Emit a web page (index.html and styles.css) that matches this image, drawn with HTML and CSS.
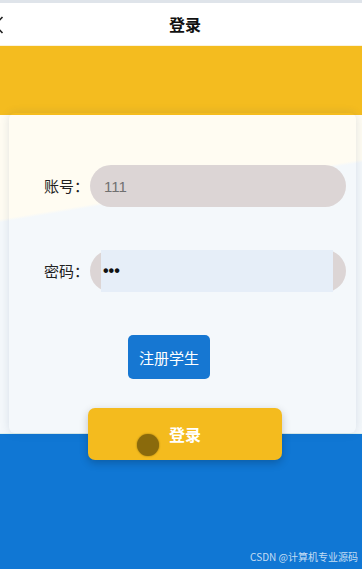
FILE: index.html
```html
<!DOCTYPE html>
<html lang="zh">
<head>
<meta charset="utf-8">
<title>登录</title>
<link rel="stylesheet" href="styles.css">
</head>
<body>
<div class="app">
  <header class="nav">
    <svg class="back" width="8" height="20" viewBox="0 0 8 20"><path d="M2.5 2 L-5 10 L2.5 18" fill="none" stroke="#222" stroke-width="1.6"/></svg>
    <h1 class="nav-title">登录</h1>
  </header>
  <main class="stage">
    <div class="band-top"></div>
    <section class="card">
      <div class="field">
        <span class="label">账号：</span>
        <div class="pill"><span class="value">111</span></div>
      </div>
      <div class="field field-pwd">
        <span class="label">密码：</span>
        <div class="pill"><div class="autofill"><span class="dots">•••</span></div></div>
      </div>
      <button class="btn-register">注册学生</button>
      <button class="btn-login">登录<span class="touch"></span></button>
    </section>
    <div class="band-bottom"><span class="mark">CSDN @计算机专业源码</span></div>
  </main>
</div>
</body>
</html>
```
FILE: styles.css
```css
* { box-sizing: border-box; }
html, body { margin: 0; padding: 0; }
body {
  width: 362px;
  height: 569px;
  overflow: hidden;
  font-family: "Noto Sans CJK SC", "Noto Sans", sans-serif;
  background: #fff;
}
.app { display: flex; flex-direction: column; height: 569px; }
.nav {
  height: 46px;
  border-top: 3px solid #dfe4ea;
  background: #fff;
  display: flex;
  align-items: center;
  justify-content: center;
  position: relative;
  border-bottom: 1px solid #fbf3dc;
  padding-left: 8px;
  flex: none;
}
.back { position: absolute; left: 0; top: 12px; }
.nav-title { margin: 0; font-size: 16px; font-weight: 700; color: #111; line-height: 20px; }
.stage {
  flex: 1;
  display: flex;
  flex-direction: column;
  background: linear-gradient(170.6deg, #fffcf2 0, #fffcf2 171px, #f4f8fb 174px, #f4f8fb 100%);
}
.band-top { height: 69px; background: #f4bc1f; flex: none; }
.card {
  margin: -2px 6px 0 9px;
  height: 320px;
  border-radius: 6px;
  box-shadow: 0 0 10px rgba(40, 70, 110, 0.14);
  display: flex;
  flex-direction: column;
  padding-top: 52px;
  position: relative;
  z-index: 1;
  flex: none;
}
.card > * { flex-shrink: 0; }
.field { display: flex; align-items: center; padding-left: 35px; padding-right: 10px; }
.field-pwd { margin-top: 43px; }
.label { width: 46px; font-size: 15px; color: #222; line-height: 20px; }
.pill {
  flex: 1;
  height: 42px;
  border-radius: 21px;
  background: #dcd5d5;
  display: flex;
  align-items: center;
  padding: 0 13px 0 11px;
}
.value { font-family: "Liberation Sans", Arial, sans-serif; font-size: 15px; color: #707070; padding-left: 3px; }
.autofill {
  flex: 1;
  align-self: stretch;
  background: #e6eef8;
  display: flex;
  align-items: center;
}
.dots { font-family: "Liberation Sans", Arial, sans-serif; font-size: 16px; font-weight: 700; color: #111; padding-left: 2px; letter-spacing: 0; line-height: 20px; }
.btn-register {
  margin: 43px 0 0 119px;
  width: 82px;
  height: 44px;
  border: none;
  border-radius: 5px;
  background: #1677d2;
  color: #fff;
  font-family: inherit;
  font-size: 15px;
  padding: 0;
  align-self: flex-start;
}
.btn-login {
  margin: 29px 0 0 79px;
  width: 194px;
  height: 52px;
  border: none;
  border-radius: 7px;
  background: #f4bb1e;
  color: #fff;
  font-family: inherit;
  font-size: 16px;
  font-weight: 700;
  padding: 0;
  align-self: flex-start;
  box-shadow: 0 3px 8px rgba(0, 0, 0, 0.22);
  position: relative;
}
.touch {
  position: absolute;
  left: 49px;
  top: 26px;
  width: 22px;
  height: 22px;
  border-radius: 50%;
  background: #8a6a0c;
  box-shadow: 0 0 2px #8a6a0c;
}
.band-bottom {
  flex: 1;
  background: #1077d4;
  border-top: 1px solid #dff2ee;
  display: flex;
  align-items: flex-end;
  justify-content: flex-end;
  padding: 0 4px 5px 0;
}
.mark { font-size: 10px; color: rgba(255, 255, 255, 0.75); line-height: 14px; }
```
